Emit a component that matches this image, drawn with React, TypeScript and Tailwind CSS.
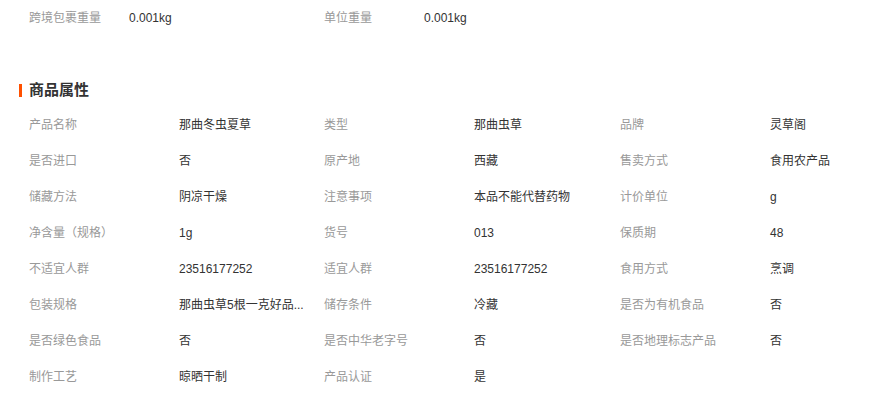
import React from 'react';

type Attr = { label: string; value: string };

const attrs: Attr[] = [
  { label: '产品名称', value: '那曲冬虫夏草' },
  { label: '类型', value: '那曲虫草' },
  { label: '品牌', value: '灵草阁' },
  { label: '是否进口', value: '否' },
  { label: '原产地', value: '西藏' },
  { label: '售卖方式', value: '食用农产品' },
  { label: '储藏方法', value: '阴凉干燥' },
  { label: '注意事项', value: '本品不能代替药物' },
  { label: '计价单位', value: 'g' },
  { label: '净含量（规格）', value: '1g' },
  { label: '货号', value: '013' },
  { label: '保质期', value: '48' },
  { label: '不适宜人群', value: '23516177252' },
  { label: '适宜人群', value: '23516177252' },
  { label: '食用方式', value: '烹调' },
  { label: '包装规格', value: '那曲虫草5根一克好品...' },
  { label: '储存条件', value: '冷藏' },
  { label: '是否为有机食品', value: '否' },
  { label: '是否绿色食品', value: '否' },
  { label: '是否中华老字号', value: '否' },
  { label: '是否地理标志产品', value: '否' },
  { label: '制作工艺', value: '晾晒干制' },
  { label: '产品认证', value: '是' },
];

const App: React.FC = () => {
  return (
    <div
      className="w-[886px] h-[394px] overflow-hidden bg-white text-[12px] text-[#333]"
      style={{ fontFamily: '"Liberation Sans", "Noto Sans CJK SC", sans-serif' }}
    >
      {/* 基本信息 */}
      <div className="flex h-[36px] items-center pl-[29px]">
        <div className="flex w-[295px]">
          <span className="w-[100px] text-[#999]">跨境包裹重量</span>
          <span>0.001kg</span>
        </div>
        <div className="flex w-[295px]">
          <span className="w-[100px] text-[#999]">单位重量</span>
          <span>0.001kg</span>
        </div>
      </div>

      {/* 商品属性 */}
      <div className="mt-[44px] flex h-[20px] items-center pl-[19px]">
        <span className="mr-[7px] h-[13px] w-[3px] bg-[#ff5000]"></span>
        <h3 className="text-[15px] font-bold text-[#333]">商品属性</h3>
      </div>

      <div className="mt-[7px] grid grid-cols-[295px_296px_266px] pl-[29px]">
        {attrs.map((a, i) => (
          <div key={i} className="flex h-[36px] items-center">
            <span className="w-[150px] shrink-0 text-[#999]">{a.label}</span>
            <span className="whitespace-nowrap">{a.value}</span>
          </div>
        ))}
      </div>
    </div>
  );
};

export default App;
